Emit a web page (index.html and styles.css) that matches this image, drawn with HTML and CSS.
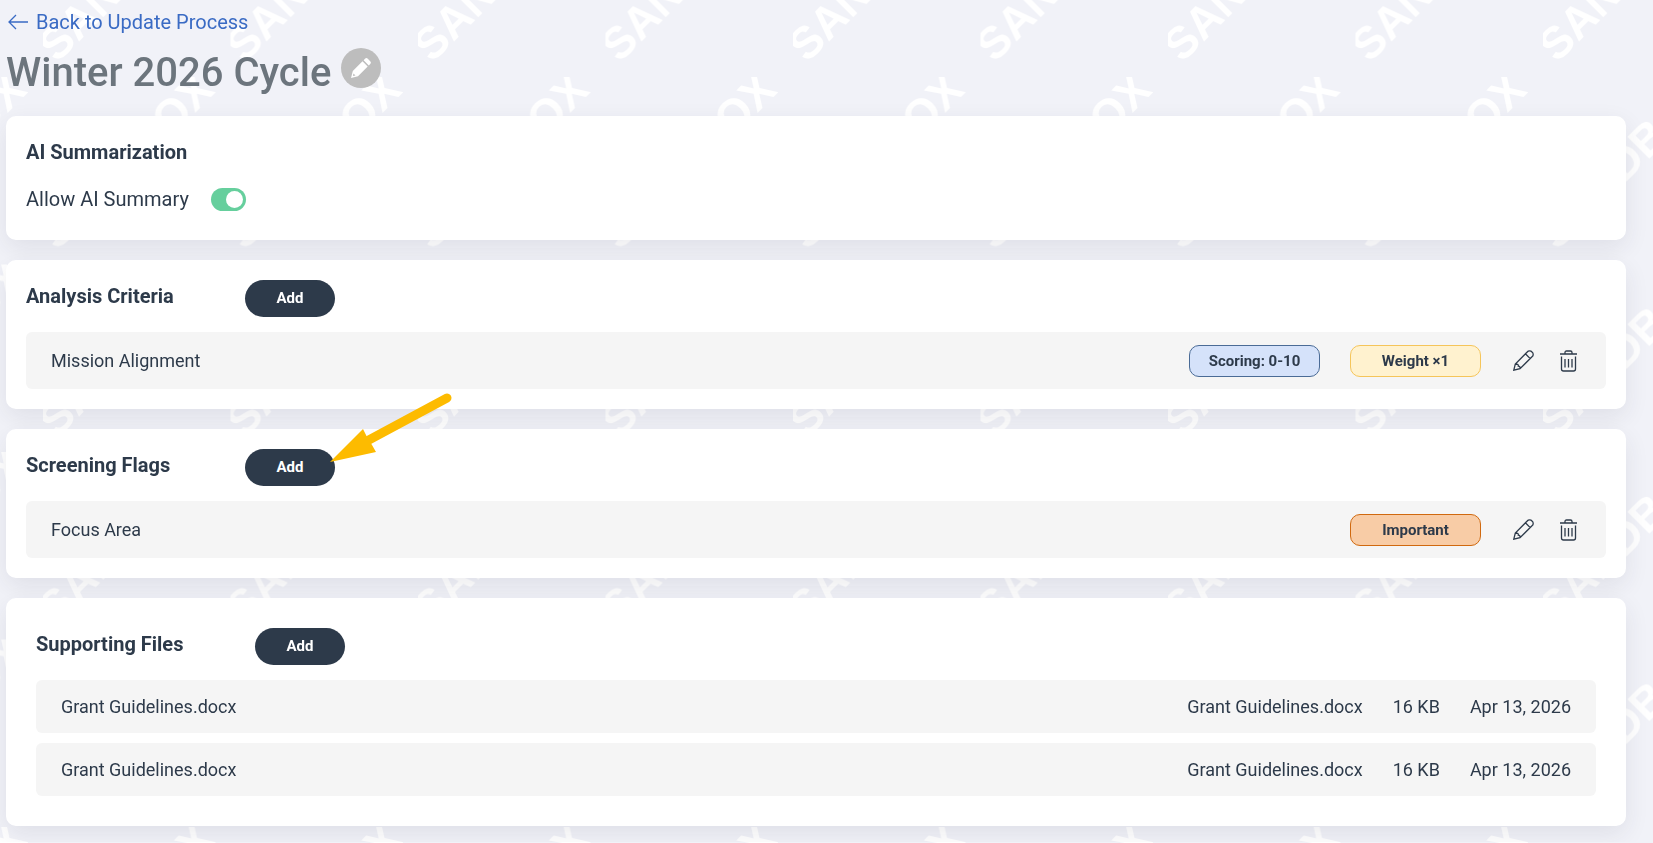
FILE: index.html
```html
<!DOCTYPE html>
<html lang="en">
<head>
  <meta charset="UTF-8" />
  <meta name="viewport" content="width=device-width, initial-scale=1.0"/>
  <title>Winter 2026 Cycle</title>
  <link rel="stylesheet" href="styles.css">
</head>
<body>
  <!-- Sandbox watermark -->
  <svg class="watermark" aria-hidden="true">
    <defs>
      <pattern id="sandbox" x="43" y="77" width="187.5" height="187.5" patternUnits="userSpaceOnUse">
        <text class="watermark-text" transform="translate(14 174) rotate(-45)">SANDBOX</text>
      </pattern>
    </defs>
    <rect width="100%" height="100%" fill="url(#sandbox)"/>
  </svg>

  <!-- Shared icons -->
  <svg class="sprite" aria-hidden="true">
    <symbol id="icon-pencil" viewBox="0 0 21 21">
      <path d="M.8 20.200l1.500-6.200L14.200 2a3 3 0 0 1 4.800 0a3 3 0 0 1 0 4.800L7 18.700zM12.400 3.800l4.800 4.800M2.300 14q3.500 0 3 2.200q2.200.2 1.700 2.500"/>
    </symbol>
    <symbol id="icon-trash" viewBox="0 0 17 22">
      <path d="M0 4h17M5 4V2.500q0-1.500 1.500-1.500h4q1.500 0 1.500 1.500V4M1.500 6.500V19q0 2 2 2h10q2 0 2-2V6.500M5 9v8.500M8.500 9v8.500M12 9v8.500"/>
    </symbol>
  </svg>

  <div class="page">
    <a class="back-link" href="#">
      <svg class="back-arrow" viewBox="0 0 20 16" aria-hidden="true"><path d="M20 8H1M8 1L1 8l7 7"/></svg>
      Back to Update Process
    </a>

    <div class="title-bar">
      <h1>Winter 2026 Cycle</h1>
      <button class="edit-title" aria-label="Edit title">
        <svg viewBox="0 0 20 20" aria-hidden="true"><path fill-rule="evenodd" d="M0 20l1.800-7L11.500 3.300l5.200 5.200L7 18.200zM1.900 18.100l2.600-.6-2-2zM12.600 2.200l1.400-1.400q1.400-1.400 2.800 0l2.400 2.400q1.400 1.400 0 2.800l-1.400 1.400z"/></svg>
      </button>
    </div>

    <section class="card">
      <h2>AI Summarization</h2>
      <div class="setting">
        <label for="ai-summary">Allow AI Summary</label>
        <input class="toggle" type="checkbox" id="ai-summary" checked>
      </div>
    </section>

    <section class="card">
      <div class="card-head">
        <h2>Analysis Criteria</h2>
        <button class="add-btn">Add</button>
      </div>
      <div class="row">
        <span class="row-name">Mission Alignment</span>
        <span class="pill scoring">Scoring: 0-10</span>
        <span class="pill weight">Weight ×1</span>
        <div class="actions">
          <button class="icon-btn" aria-label="Edit"><svg width="21" height="21"><use href="#icon-pencil"/></svg></button>
          <button class="icon-btn" aria-label="Delete"><svg width="17" height="22"><use href="#icon-trash"/></svg></button>
        </div>
      </div>
    </section>

    <section class="card">
      <div class="card-head">
        <h2>Screening Flags</h2>
        <div class="pointed">
          <button class="add-btn">Add</button>
          <svg class="pointer" viewBox="0 0 130 80" aria-hidden="true">
            <path class="pointer-line" d="M42 54L122 11"/>
            <path class="pointer-head" d="M5 75L38 42l4 8 5 8 4 7z"/>
          </svg>
        </div>
      </div>
      <div class="row">
        <span class="row-name">Focus Area</span>
        <span class="pill important">Important</span>
        <div class="actions">
          <button class="icon-btn" aria-label="Edit"><svg width="21" height="21"><use href="#icon-pencil"/></svg></button>
          <button class="icon-btn" aria-label="Delete"><svg width="17" height="22"><use href="#icon-trash"/></svg></button>
        </div>
      </div>
    </section>

    <section class="card files">
      <div class="card-head">
        <h2>Supporting Files</h2>
        <button class="add-btn">Add</button>
      </div>
      <div class="row">
        <span class="row-name">Grant Guidelines.docx</span>
        <span>Grant Guidelines.docx</span>
        <span>16 KB</span>
        <span>Apr 13, 2026</span>
      </div>
      <div class="row">
        <span class="row-name">Grant Guidelines.docx</span>
        <span>Grant Guidelines.docx</span>
        <span>16 KB</span>
        <span>Apr 13, 2026</span>
      </div>
    </section>
  </div>
</body>
</html>
```
FILE: styles.css
```css
* {
  box-sizing: border-box;
}

body {
  margin: 0;
  background: #f1f2f8;
  font-family: Roboto, "Liberation Sans", sans-serif;
  font-size: 18px;
  color: #2d3a4a;
}

button {
  font-family: inherit;
  padding: 0;
  border: none;
  cursor: pointer;
}

h1, h2 {
  margin: 0;
}

.watermark {
  position: fixed;
  top: 0;
  left: 0;
  width: 100%;
  height: 100%;
  z-index: -1;
}

.watermark-text {
  font-family: "Liberation Sans", Arial, sans-serif;
  font-size: 45px;
  font-weight: bold;
  fill: #fff;
}

.sprite {
  position: absolute;
  width: 0;
  height: 0;
}

.page {
  padding: 10px 27px 16px 6px;
}

/* Header */
.back-link {
  display: inline-flex;
  align-items: center;
  gap: 8px;
  padding-left: 2px;
  font-size: 20px;
  line-height: 24px;
  color: #3a6bc4;
  text-decoration: none;
}

.back-arrow {
  width: 20px;
  height: 16px;
  fill: none;
  stroke: currentColor;
  stroke-width: 1.3;
}

.title-bar {
  display: flex;
  align-items: flex-start;
  gap: 10px;
  padding: 14px 0 18px;
}

h1 {
  font-size: 40px;
  font-weight: 500;
  line-height: 50px;
  color: #6c757d;
}

.edit-title {
  display: flex;
  align-items: center;
  justify-content: center;
  width: 40px;
  height: 40px;
  border-radius: 50%;
  background: #bdbdbd;
}

.edit-title svg {
  width: 20px;
  height: 20px;
  fill: #fff;
}

/* Cards */
.card {
  margin-bottom: 20px;
  padding: 20px;
  background: #fff;
  border-radius: 10px;
  box-shadow: 0 8px 24px rgba(40, 41, 61, 0.09);
}

.card.files {
  margin-bottom: 0;
  padding: 30px;
}

h2 {
  font-size: 20px;
  font-weight: bold;
  line-height: 32px;
}

.card-head {
  display: flex;
  align-items: flex-start;
  margin-bottom: 15px;
}

.card-head h2 {
  width: 219px;
}

.add-btn {
  display: block;
  width: 90px;
  height: 37px;
  padding-bottom: 2px;
  border-radius: 20px;
  background: #2d3a4a;
  color: #fff;
  font-size: 15px;
  font-weight: bold;
}

.setting {
  display: flex;
  align-items: center;
  gap: 22px;
  margin: 15px 0 5px;
  font-size: 20px;
  line-height: 32px;
}

.toggle {
  appearance: none;
  width: 35px;
  height: 23px;
  margin: 0;
  padding: 3px;
  border-radius: 12px;
  background: #66cf9d;
  cursor: pointer;
}

.toggle::before {
  content: "";
  display: block;
  width: 17px;
  height: 17px;
  border-radius: 50%;
  background: #fff;
}

.toggle:checked::before {
  margin-left: auto;
}

/* Rows */
.row {
  display: flex;
  align-items: center;
  gap: 30px;
  height: 57px;
  padding: 0 25px;
  border-radius: 6px;
  background: #f5f5f5;
}

.row-name {
  flex: 1;
}

.files .row {
  height: 53px;
}

.files .row + .row {
  margin-top: 10px;
}

.pill {
  width: 131px;
  border: 1px solid;
  border-radius: 10px;
  font-size: 15px;
  font-weight: bold;
  line-height: 30px;
  text-align: center;
}

.scoring {
  background: #d5e2fa;
  border-color: #4a6b96;
}

.weight {
  background: #fff2cf;
  border-color: #f5c55a;
}

.important {
  background: #f8cca6;
  border-color: #d0690f;
}

.actions {
  display: flex;
  gap: 20px;
}

.icon-btn {
  display: flex;
  align-items: center;
  justify-content: center;
  width: 25px;
  height: 25px;
  background: none;
}

.icon-btn svg {
  fill: none;
  stroke: #2d3a4a;
  stroke-width: 1.3;
}

/* Arrow pointing at the add button */
.pointed {
  position: relative;
}

.pointer {
  position: absolute;
  left: 80px;
  top: -62px;
  width: 130px;
  height: 80px;
  pointer-events: none;
}

.pointer-line {
  stroke: #fdbb00;
  stroke-width: 9;
  stroke-linecap: round;
}

.pointer-head {
  fill: #fdbb00;
}
```
